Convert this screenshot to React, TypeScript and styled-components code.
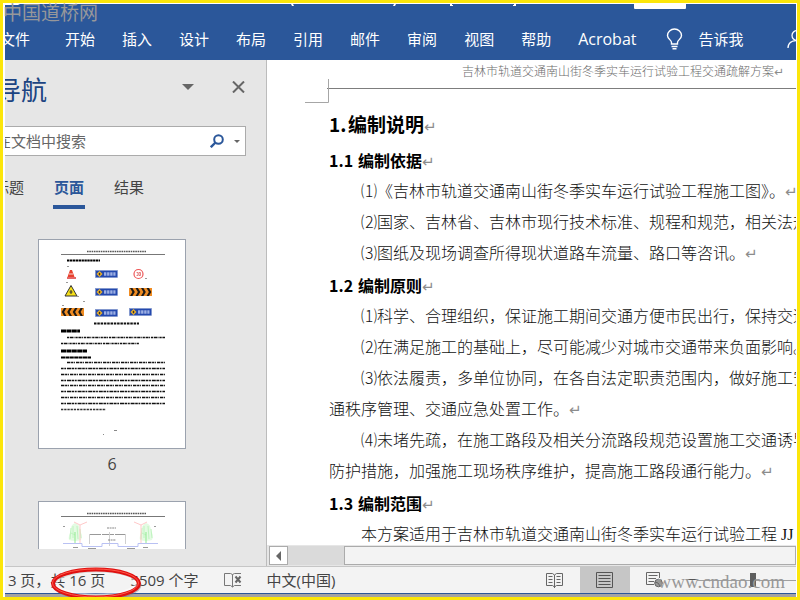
import React from "react";
import styled, { createGlobalStyle } from "styled-components";

const ui = '"Open Sans", "Noto Sans CJK SC", sans-serif';
const song = '"Liberation Serif", "Noto Sans CJK SC", serif';
const hei = '"Noto Sans CJK SC", sans-serif';
const blue = "#2b579a";

const GlobalStyle = createGlobalStyle`
  * { box-sizing: border-box; }
  body { margin: 0; }
  button, input { font: inherit; color: inherit; margin: 0; padding: 0; border: 0; background: none; }
  h1, h2, p { margin: 0; }
  svg { display: block; flex: none; }
`;

const Frame = styled.div`
  position: relative;
  height: 100vh;
  overflow: hidden;
  border: 3px solid #fce60a;
  font-family: ${ui};
  font-size: 15px;
  color: #444;
`;

const Window = styled.div`
  height: 100%;
  display: flex;
  flex-direction: column;
  overflow: hidden;
  border: solid #fff;
  border-width: 1px 1px 0 2px;
`;

const Ribbon = styled.header`
  flex: none;
  background: ${blue};
  color: #fff;
`;

const TitleStrip = styled.div`
  height: 15px;
  overflow: hidden;
`;

const TabRow = styled.nav`
  display: flex;
  align-items: center;
  gap: 27px;
  height: 40px;
  margin: 0 0 1px -5px;
  overflow: hidden;
`;

const RibbonTab = styled.button<{ $file?: boolean }>`
  flex: none;
  line-height: 24px;
  white-space: nowrap;
  margin-right: ${(p) => (p.$file ? "8px" : "0")};
`;

const LatinTab = styled(RibbonTab)`
  font-size: 16px;
`;

const TellMe = styled.button`
  flex: none;
  display: flex;
  align-items: center;
  gap: 15px;
  margin-left: 3px;
  line-height: 24px;
  white-space: nowrap;
`;

const Account = styled.button`
  flex: none;
  margin-left: auto;
  margin-right: -11px;
`;

const Workspace = styled.div`
  flex: 1;
  min-height: 0;
  display: flex;
`;

const NavPane = styled.aside`
  flex: 0 0 262px;
  display: flex;
  flex-direction: column;
  overflow: hidden;
  padding-bottom: 17px;
  background: #e6e6e6;
  border-right: 1px solid #bcbcbc;
`;

const NavHeader = styled.div`
  flex: none;
  display: flex;
  align-items: center;
  height: 60px;
  margin-left: -10px;
  padding-right: 21px;
`;

const NavTitle = styled.h2`
  flex: 1;
  font-size: 26px;
  font-weight: 400;
  line-height: 40px;
  color: #1c4482;
`;

const IconButton = styled.button`
  display: flex;
  padding: 0 0 6px;
`;

const HeaderIcons = styled.div`
  display: flex;
  align-items: center;
  gap: 38px;
`;

const SearchBox = styled.div`
  flex: none;
  display: flex;
  align-items: center;
  gap: 10px;
  height: 30px;
  margin: 6px 20px 0 -10px;
  padding: 0 5px 0 0;
  background: #fff;
  border: 1px solid #ababab;
`;

const SearchInput = styled.input`
  flex: 1;
  min-width: 0;
  outline: 0;
  &::placeholder { color: #666; opacity: 1; }
`;

const PlainButton = styled.button`
  flex: none;
`;

const NavTabs = styled.div`
  flex: none;
  display: flex;
  gap: 28px;
  margin: 16px 0 0 -12px;
`;

const NavTab = styled.button<{ $active?: boolean }>`
  padding: 0 1px 3px;
  line-height: 30px;
  border-bottom: 4px solid ${(p) => (p.$active ? blue : "transparent")};
  color: ${(p) => (p.$active ? blue : "#444")};
  font-weight: ${(p) => (p.$active ? 700 : 400)};
`;

const ThumbList = styled.div`
  flex: 1;
  min-height: 0;
  overflow: hidden;
  display: flex;
  flex-direction: column;
  gap: 22px;
  margin-top: 30px;
  padding-left: 33px;
`;

const Thumb = styled.button`
  flex: none;
  display: block;
  width: 148px;
`;

const ThumbPage = styled.span`
  display: block;
  height: 210px;
  background: #fff;
  border: 1px solid #9ba2ae;
`;

const ThumbLabel = styled.span`
  display: block;
  font-size: 16px;
  line-height: 30px;
  text-align: center;
`;

const DocColumn = styled.main`
  flex: 1;
  min-width: 0;
  display: flex;
  flex-direction: column;
  background: #fff;
`;

const Paper = styled.article`
  flex: 1;
  min-height: 0;
  overflow: hidden;
  white-space: nowrap;
  color: #111;
`;

const PageHeader = styled.div`
  position: relative;
  height: 29px;
  margin-left: 60px;
  padding-left: 135px;
  border-bottom: 1px solid #7d7d7d;
  font: 300 12px/24px ${song};
  color: #6c6c6c;
`;

const CropMark = styled.svg`
  position: absolute;
  left: -22px;
  top: 19px;
`;

const PageBody = styled.div`
  padding: 17px 0 0 62px;
  font-family: ${song};
  font-size: 16px;
`;

const Heading = styled.h1`
  margin-bottom: 2px;
  font: 700 19px/36px ${hei};
  color: #000;
`;

const SubHeading = styled.h2`
  font: 700 16px/32px ${hei};
  color: #000;
`;

const Numeral = styled.span<{ $wide?: boolean }>`
  display: inline-block;
  min-width: ${(p) => (p.$wide ? "29px" : "19px")};
`;

const Line = styled.p<{ $indent?: boolean }>`
  height: 31px;
  line-height: 31px;
  font-weight: 300;
  padding-left: ${(p) => (p.$indent ? "32px" : "0")};
`;

const Mark = styled.span<{ $small?: boolean }>`
  font-family: "DejaVu Sans", sans-serif;
  font-weight: 400;
  font-size: ${(p) => (p.$small ? "12px" : "15px")};
  line-height: 12px;
  color: #8c8c8c;
`;

const ScrollBar = styled.div`
  flex: none;
  display: flex;
  height: 21px;
  padding: 1px 0 1px 2px;
  background: #e6e6e6;
`;

const ScrollArrow = styled.button`
  flex: none;
  display: grid;
  place-items: center;
  width: 19px;
  background: #fff;
  border: 1px solid #ababab;
`;

const ScrollTrack = styled.div`
  flex: 1;
  padding-left: 56px;
  background: #dadada;
`;

const ScrollThumb = styled.div`
  height: 100%;
  background: #f3f3f3;
  border: 1px solid #ababab;
`;

const StatusBar = styled.footer`
  flex: none;
  display: flex;
  align-items: center;
  height: 27px;
  overflow: hidden;
  background: #f3f3f3;
  border-top: 1px solid #c6c6c6;
  white-space: nowrap;
`;

const StatusItems = styled.div`
  display: flex;
  align-items: center;
  gap: 25px;
  margin-left: -16px;
`;

const StatusButton = styled.button`
  line-height: 24px;
`;

const ViewControls = styled.div`
  display: flex;
  align-items: center;
  height: 100%;
  margin-left: auto;
  margin-right: -13px;
`;

const ViewButton = styled.button<{ $active?: boolean }>`
  display: grid;
  place-items: center;
  width: 50px;
  height: 100%;
  padding-right: 1px;
  background: ${(p) => (p.$active ? "#c6c6c6" : "transparent")};
`;

const ZoomOut = styled.button`
  width: 10px;
  height: 20px;
  margin-left: 7px;
`;

const ZoomSlider = styled.input`
  appearance: none;
  width: 112px;
  height: 16px;
  background: linear-gradient(#a0a0a0, #a0a0a0) center / 100% 1px no-repeat;
  &::-webkit-slider-thumb {
    appearance: none;
    width: 6px;
    height: 14px;
    background: #5e5e5e;
  }
`;

const WindowEdge = styled.div`
  flex: none;
  height: 4px;
  background: #a3a3a3;
  border-top: 1px solid ${blue};
`;

const SiteName = styled.div`
  position: absolute;
  left: 0;
  top: -5px;
  font: 19px/28px ${hei};
  color: #97979a;
`;

const SiteAddress = styled.div`
  position: absolute;
  right: 12px;
  bottom: 3px;
  font: 19px/24px "Liberation Serif", serif;
  color: #989898;
`;

const Highlight = styled.svg`
  position: absolute;
  left: 45px;
  bottom: -3px;
  pointer-events: none;
`;

const Return = ({ small }: { small?: boolean }) => <Mark $small={small}>↵</Mark>;

const Caret = ({ w, h }: { w: number; h: number }) => (
  <svg width={w} height={h}>
    <path d={`M0 0H${w}L${w / 2} ${h}Z`} fill="#666" />
  </svg>
);

const Sign = ({ x, y }: { x: number; y: number }) => (
  <g transform={`translate(${x} ${y})`}>
    <rect width="22" height="7" fill="#2449ae" stroke="#7b92c9" strokeWidth=".6" />
    <path d="M4 .6L7 3.5L4 6.4L1 3.5Z" fill="#f0b429" />
    <path d="M3 3.5H5M4 2.3V4.8" stroke="#222" strokeWidth=".8" />
    <path d="M8.500 3.500H20" stroke="#d3dcfa" strokeWidth="3" strokeDasharray="2.400 .7" />
    <path d="M8 3.500H20.500" stroke="#2449ae" strokeWidth=".6" />
  </g>
);

const Chevrons = ({ x, y, left }: { x: number; y: number; left?: boolean }) => (
  <g transform={left ? `translate(${x + 23} ${y}) scale(-1 1)` : `translate(${x} ${y})`}>
    <rect width="23" height="8" fill="#f08c22" />
    {[1, 6.5, 12, 17.5].map((n) => (
      <path key={n} d={`M${n} 0h2.4l2.4 4l-2.4 4h-2.4l2.4-4z`} fill="#1d1a17" />
    ))}
  </g>
);

const RunningHead = () => (
  <g>
    <path d="M48 11.5H107" stroke="#555" strokeWidth="1.4" strokeDasharray="1.6 .7" />
    <path d="M22 14.5H126" stroke="#777" />
  </g>
);

const SignsPage = () => (
  <svg width="146" height="208" viewBox="0 0 146 208">
    <RunningHead />
    <g transform="translate(-1 0)">
      <path d="M29 20.500H62" stroke="#000" strokeWidth="2" strokeDasharray="2.400 .5" />
      <path d="M32 30H34L36.500 37H29.500Z" fill="#e7402c" />
      <path d="M29 38H38" stroke="#d33" strokeWidth="1.500" />
      <path d="M31 34H35" stroke="#fff" strokeWidth=".8" />
      <path d="M33 45.500L39 56H27Z" fill="#f6df18" stroke="#333" />
      <path d="M33 50V54M31.500 52H34.500" stroke="#333" strokeWidth="1" />
      <Sign x={57.5} y={30.5} />
      <Sign x={57.5} y={48.5} />
      <Sign x={57.5} y={69.5} />
      <Sign x={91.5} y={68.5} />
      <circle cx="100.500" cy="34" r="4.500" fill="#fff" stroke="#e55" strokeWidth="1.200" />
      <path d="M98.500 32.500H100V35.500H98.500M101 32.500H102.500V35.500H101Z" fill="none" stroke="#d55" strokeWidth=".7" />
      <Chevrons x={91} y={48} />
      <Chevrons x={23} y={68} left />
      <path d="M29 26.500H31M28 42.500H30M45 61.500H47M24 65.500H26M39 56.500H41M107 38.500H109" stroke="#999" />
      <path d="M56 83.500H101" stroke="#111" strokeWidth="1.800" strokeDasharray="2.500 .8" />
      <path d="M23 91H42M23 111H49" stroke="#000" strokeWidth="2.800" strokeDasharray="5 .4" />
      <path d="M23 117.500H53" stroke="#000" strokeWidth="2" strokeDasharray="4 .4" />
      <path d="M29 97.500H127M23 103.500H101" stroke="#111" strokeWidth="1.700" strokeDasharray="2.300 .7 3 .5 1 .9" />
      {[122.5, 128.5, 134.5, 140.5, 145.5, 151.5, 157.5, 163.5].map((y, i) => (
        <path
          key={y}
          d={`M${i ? 23 : 29} ${y}H127`}
          stroke="#111"
          strokeWidth="1.700"
          strokeDasharray={i % 2 ? "2.600 .7 1.800 .9 4 .6" : "3.400 .7 2.200 .6 1 1.100"}
        />
      ))}
      <path d="M23 169.500H68" stroke="#333" strokeWidth="1.700" strokeDasharray="2.300 .9" />
      <path d="M76 190.500H79M65 194.500H66" stroke="#888" />
    </g>
  </svg>
);

const Tree = ({ x }: { x: number }) => (
  <g transform={`translate(${x} 0)`}>
    <path d="M0 21Q-5 23-4 29Q-7 33-6 38Q0 40 6 38Q8 33 5 29Q5 22 0 21" fill="#e4fbe3" />
    <path d="M-4 26L-5 37M-2 24V36M2 24L3 37M5 27L6 36M-4 31L0 33" stroke="#c0f4c0" fill="none" />
    <path d="M0 30V41" stroke="#8fe98f" />
  </g>
);

const SectionPage = () => (
  <svg width="146" height="208" viewBox="0 0 146 208">
    <RunningHead />
    <Tree x={36} />
    <Tree x={107} />
    <path d="M41 42V23L35 20M41 23L48 20M102 42V23L95 20M102 23L108 20" fill="none" stroke="#ffc9c9" />
    <path d="M50 32.500H87" stroke="#999" strokeDasharray="12 1" />
    <path d="M50.500 32V42M70.500 30V44M86.500 32V42" stroke="#d0d0d0" />
    <path d="M68 26H77M69 38H77" stroke="#888" strokeWidth="1.200" strokeDasharray="2 .6" />
    <path d="M24 41.500H43V44.500H63V41.500H79V44.500H99V41.500H119" fill="none" stroke="#b9c1f3" />
    <path d="M34 45.500H39M49 46.500H57M88 46.500H96M104 45.500H109M24 24.500H26M115 24.500H117" stroke="#999" />
  </svg>
);

const tabs = ["开始", "插入", "设计", "布局", "引用", "邮件", "审阅", "视图", "帮助"];

export default function App() {
  return (
    <Frame>
      <GlobalStyle />
      <Window>
        <Ribbon>
          <TitleStrip>
            <svg width="700" height="6" fill="#fff">
              <path d="M0 0H15L13 1H0ZM629 0H681V4Q681 5 680 5H630Q629 5 629 4ZM286 0H288L289 2H287ZM389 0H391L390 2H388ZM445 0H447V1H448V2H445ZM509 0H511V2H508V1H509Z" />
            </svg>
          </TitleStrip>
          <TabRow>
            <RibbonTab $file>文件</RibbonTab>
            {tabs.map((t) => <RibbonTab key={t}>{t}</RibbonTab>)}
            <LatinTab>Acrobat</LatinTab>
            <TellMe>
              <svg width="17" height="22" viewBox="0 0 17 22" fill="none" stroke="#fff" strokeWidth="1.400">
                <path d="M5.500 16V14.500C5.500 12 1.500 11 1.500 7.500A7 6.500 0 0 1 15.500 7.500C15.500 11 11.500 12 11.500 14.500V16ZM5.500 18.500H11.500M6.500 20.800H10.500" />
              </svg>
              告诉我
            </TellMe>
            <Account aria-label="账户">
              <svg width="20" height="20" viewBox="0 0 20 20" fill="none" stroke="#fff" strokeWidth="1.300">
                <circle cx="10" cy="6.500" r="5" />
                <path d="M1 19C1 14 5 11.500 10 11.500S19 14 19 19" />
              </svg>
            </Account>
          </TabRow>
        </Ribbon>

        <Workspace>
          <NavPane>
            <NavHeader>
              <NavTitle>导航</NavTitle>
              <HeaderIcons>
                <IconButton aria-label="选项"><Caret w={12} h={6} /></IconButton>
                <IconButton aria-label="关闭">
                  <svg width="13" height="12" stroke="#666" strokeWidth="2">
                    <path d="M1 .5L12 11.500M12 .5L1 11.500" />
                  </svg>
                </IconButton>
              </HeaderIcons>
            </NavHeader>
            <SearchBox>
              <SearchInput aria-label="在文档中搜索" placeholder="在文档中搜索" />
              <PlainButton aria-label="搜索">
                <svg width="14" height="14" viewBox="0 0 14 14" fill="none" stroke={blue} strokeWidth="2">
                  <circle cx="8.500" cy="5.500" r="4.300" />
                  <path d="M5.500 8.500L.8 13.200" strokeWidth="2.400" />
                </svg>
              </PlainButton>
              <PlainButton aria-label="搜索选项"><Caret w={6} h={3} /></PlainButton>
            </SearchBox>
            <NavTabs>
              <NavTab>标题</NavTab>
              <NavTab $active>页面</NavTab>
              <NavTab>结果</NavTab>
            </NavTabs>
            <ThumbList>
              <Thumb>
                <ThumbPage><SignsPage /></ThumbPage>
                <ThumbLabel>6</ThumbLabel>
              </Thumb>
              <Thumb aria-label="7">
                <ThumbPage><SectionPage /></ThumbPage>
              </Thumb>
            </ThumbList>
          </NavPane>

          <DocColumn>
            <Paper>
              <PageHeader>
                <CropMark width="24" height="24" fill="none" stroke="#a6a6a6">
                  <path d="M23.500 0V23.500H0" />
                </CropMark>
                吉林市轨道交通南山街冬季实车运行试验工程交通疏解方案<Return small />
              </PageHeader>
              <PageBody>
                <Heading><Numeral>1.</Numeral>编制说明<Return /></Heading>
                <SubHeading><Numeral $wide>1.1</Numeral>编制依据<Return /></SubHeading>
                <Line $indent>⑴《吉林市轨道交通南山街冬季实车运行试验工程施工图》。<Return /></Line>
                <Line $indent>⑵国家、吉林省、吉林市现行技术标准、规程和规范，相关法规</Line>
                <Line $indent>⑶图纸及现场调查所得现状道路车流量、路口等咨讯。<Return /></Line>
                <SubHeading><Numeral $wide>1.2</Numeral>编制原则<Return /></SubHeading>
                <Line $indent>⑴科学、合理组织，保证施工期间交通方便市民出行，保持交通</Line>
                <Line $indent>⑵在满足施工的基础上，尽可能减少对城市交通带来负面影响。</Line>
                <Line $indent>⑶依法履责，多单位协同，在各自法定职责范围内，做好施工安</Line>
                <Line>通秩序管理、交通应急处置工作。<Return /></Line>
                <Line $indent>⑷未堵先疏，在施工路段及相关分流路段规范设置施工交通诱导</Line>
                <Line>防护措施，加强施工现场秩序维护，提高施工路段通行能力。<Return /></Line>
                <SubHeading><Numeral $wide>1.3</Numeral>编制范围<Return /></SubHeading>
                <Line $indent>本方案适用于吉林市轨道交通南山街冬季实车运行试验工程 JJ</Line>
              </PageBody>
            </Paper>
            <ScrollBar>
              <ScrollArrow aria-label="向左滚动">
                <svg width="5" height="10"><path d="M5 0V10L0 5Z" fill="#666" /></svg>
              </ScrollArrow>
              <ScrollTrack><ScrollThumb /></ScrollTrack>
            </ScrollBar>
          </DocColumn>
        </Workspace>

        <StatusBar>
          <StatusItems>
            <StatusButton>第 3 页，共 16 页</StatusButton>
            <StatusButton>5509 个字</StatusButton>
            <StatusButton aria-label="校对">
              <svg width="18" height="16" viewBox="0 0 18 16" fill="none" stroke="#777">
                <path d="M8.500 2.500L6.500 1.500H.5V13.500H6.500L8.500 15L10.500 13.500H17M8.500 2.500V15M8.500 2.500L10.500 1.500H17" />
                <path d="M11.500 4.500L16.500 10.500M16.500 4.500L11.500 10.500" strokeWidth="2" stroke="#666" />
              </svg>
            </StatusButton>
            <StatusButton>中文(中国)</StatusButton>
          </StatusItems>
          <ViewControls>
            <ViewButton aria-label="阅读视图">
              <svg width="17" height="15" viewBox="0 0 17 15" fill="none" stroke="#666">
                <path d="M8.500 2L6.500.5H.5V12.500H6.500L8.500 14L10.500 12.500H16.500V.5H10.500ZM8.500 2V15M2.500 3.500H6.500M2.500 6.500H6.500M2.500 9.500H6.500M10.500 3.500H14.500M10.500 6.500H14.500M10.500 9.500H14.500" />
              </svg>
            </ViewButton>
            <ViewButton $active aria-label="页面视图">
              <svg width="17" height="16" fill="none" stroke="#555">
                <path d="M.5.5H16.500V15.500H.5ZM2.500 3.500H14.500M2.500 6.500H14.500M2.500 9.500H14.500M2.500 12.500H14.500" />
              </svg>
            </ViewButton>
            <ViewButton aria-label="Web 版式视图">
              <svg width="18" height="16" fill="none" stroke="#666">
                <path d="M8 12.500H.5V.5H13.500V6M2.500 3.500H11.500M2.500 6.500H10M2.500 9.500H8" />
                <circle cx="12.500" cy="11" r="3.800" fill="#999" />
                <path d="M9 10L12 11L14 14M12.500 7.500L15 10" />
              </svg>
            </ViewButton>
            <ZoomOut aria-label="缩小">
              <svg width="10" height="20"><path d="M0 9.500H10" stroke="#555" /></svg>
            </ZoomOut>
            <ZoomSlider type="range" aria-label="缩放" defaultValue={50} />
          </ViewControls>
        </StatusBar>
        <WindowEdge />
      </Window>

      <SiteName>中国道桥网</SiteName>
      <SiteAddress>www.cndao.com</SiteAddress>
      <Highlight width="98" height="35" viewBox="0 0 98 35" fill="none">
        <ellipse cx="49" cy="20" rx="43" ry="14" stroke="#777" strokeOpacity=".45" strokeWidth="3" />
        <ellipse cx="48" cy="18.500" rx="40" ry="11.500" stroke="#fff" strokeOpacity=".5" strokeWidth="3" />
        <ellipse cx="48" cy="18.500" rx="43" ry="14" stroke="#e01010" strokeWidth="4" />
        <ellipse cx="47.500" cy="18" rx="43" ry="14" stroke="#ff5a4a" strokeWidth="1" />
      </Highlight>
    </Frame>
  );
}
